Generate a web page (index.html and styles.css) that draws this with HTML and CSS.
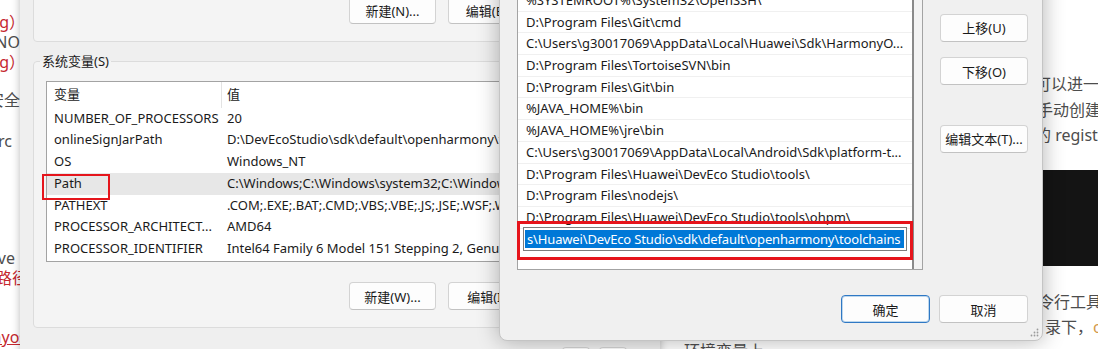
FILE: index.html
```html
<!DOCTYPE html>
<html lang="zh-CN">
<head>
    <meta charset="UTF-8">
    <meta name="viewport" content="width=device-width, initial-scale=1.0">
    <title>编辑环境变量</title>
    <link rel="stylesheet" href="styles.css">
</head>
<body>
<div class="desktop">

    <!-- blog page behind the dialogs -->
    <div class="page">
        <div class="page-left">
            <div class="para para-1">
                <div class="ln red"><span class="cut-5">ohpm 的安装路径g）</span></div>
                <div class="ln"><span>NPM_CONFIG_REGISTRY_ERNO</span></div>
                <div class="ln red"><span class="cut-5">以实际路径为准g）</span></div>
            </div>
            <div class="para para-2">
                <div class="ln"><span>以保证安全</span></div>
            </div>
            <div class="para para-3">
                <div class="ln"><span class="end-8">配置 .npmrc</span></div>
            </div>
            <div class="para para-4">
                <div class="ln"><span class="end-5">ohpm remove</span></div>
                <div class="ln red"><span class="cut-8">安装路径</span></div>
            </div>
            <div class="para para-5">
                <div class="ln red link"><span class="cut-7">openharmonyos</span></div>
            </div>
        </div>
        <div class="page-mid">环境变量上</div>
        <div class="page-right">
            <div class="rl in-1">可以进一步确认配置是否生效</div>
            <div class="rl in-3">手动创建配置文件</div>
            <div class="rl in-1">的 registry 地址</div>
            <div class="code-block"></div>
            <div class="rl rl-after in-4">令行工具</div>
            <div class="rl in-11">录下，<span class="hl">ohpm</span></div>
        </div>
    </div>

    <!-- 环境变量 dialog -->
    <div class="dialog env-dialog">
        <div class="group user-group">
            <div class="btn-row">
                <button class="btn">新建(N)...</button>
                <button class="btn">编辑(E)...</button>
                <button class="btn">删除(D)</button>
            </div>
        </div>
        <fieldset class="group sys-group">
            <legend>系统变量(S)</legend>
            <div class="listview">
                <div class="lv-head"><span class="lv-name">变量</span><span class="lv-val">值</span></div>
                <div class="lv-row"><span class="lv-name">NUMBER_OF_PROCESSORS</span><span class="lv-val">20</span></div>
                <div class="lv-row"><span class="lv-name">onlineSignJarPath</span><span class="lv-val">D:\DevEcoStudio\sdk\default\openharmony\toolchains\lib\hap-sign-tool.jar</span></div>
                <div class="lv-row"><span class="lv-name">OS</span><span class="lv-val">Windows_NT</span></div>
                <div class="lv-row is-selected"><span class="lv-name is-marked">Path</span><span class="lv-val">C:\Windows;C:\Windows\system32;C:\Windows\System32\Wbem;C:\Windows\System32\WindowsPowerShell\v1.0\</span></div>
                <div class="lv-row"><span class="lv-name">PATHEXT</span><span class="lv-val">.COM;.EXE;.BAT;.CMD;.VBS;.VBE;.JS;.JSE;.WSF;.WSH;.MSC</span></div>
                <div class="lv-row"><span class="lv-name">PROCESSOR_ARCHITECT...</span><span class="lv-val">AMD64</span></div>
                <div class="lv-row"><span class="lv-name">PROCESSOR_IDENTIFIER</span><span class="lv-val">Intel64 Family 6 Model 151 Stepping 2, GenuineIntel</span></div>
            </div>
            <div class="btn-row">
                <button class="btn">新建(W)...</button>
                <button class="btn">编辑(I)...</button>
                <button class="btn">删除(L)</button>
            </div>
        </fieldset>
        <div class="dialog-foot env-foot">
            <button class="btn">确定</button>
            <button class="btn">取消</button>
        </div>
    </div>

    <!-- 编辑环境变量 dialog -->
    <div class="dialog edit-dialog">
        <div class="edit-body">
            <div class="pathlist">
                <div class="pl-rows">
                    <div class="pl-row">%SYSTEMROOT%\System32\OpenSSH\</div>
                    <div class="pl-row">D:\Program Files\Git\cmd</div>
                    <div class="pl-row">C:\Users\g30017069\AppData\Local\Huawei\Sdk\HarmonyO...</div>
                    <div class="pl-row">D:\Program Files\TortoiseSVN\bin</div>
                    <div class="pl-row">D:\Program Files\Git\bin</div>
                    <div class="pl-row">%JAVA_HOME%\bin</div>
                    <div class="pl-row">%JAVA_HOME%\jre\bin</div>
                    <div class="pl-row">C:\Users\g30017069\AppData\Local\Android\Sdk\platform-t...</div>
                    <div class="pl-row">D:\Program Files\Huawei\DevEco Studio\tools\</div>
                    <div class="pl-row">D:\Program Files\nodejs\</div>
                    <div class="pl-row">D:\Program Files\Huawei\DevEco Studio\tools\ohpm\</div>
                    <div class="pl-edit-row">
                        <div class="pl-input"><span class="pl-sel">s\Huawei\DevEco Studio\sdk\default\openharmony\toolchains</span></div>
                    </div>
                </div>
                <div class="pl-scroll"></div>
                <div class="mark-box"></div>
            </div>
            <div class="side-btns">
                <button class="btn">删除(D)</button>
                <button class="btn">上移(U)</button>
                <button class="btn">下移(O)</button>
                <button class="btn btn-gap">编辑文本(T)...</button>
            </div>
        </div>
        <div class="dialog-foot">
            <button class="btn btn-default">确定</button>
            <button class="btn">取消</button>
        </div>
        <svg class="grip" width="9" height="9" viewBox="0 0 9 9">
            <circle cx="7.5" cy="1.5" r="0.9" fill="#9a9a9a"/>
            <circle cx="4.5" cy="4.5" r="0.9" fill="#9a9a9a"/>
            <circle cx="7.5" cy="4.5" r="0.9" fill="#9a9a9a"/>
            <circle cx="1.5" cy="7.5" r="0.9" fill="#9a9a9a"/>
            <circle cx="4.5" cy="7.5" r="0.9" fill="#9a9a9a"/>
            <circle cx="7.5" cy="7.5" r="0.9" fill="#9a9a9a"/>
        </svg>
    </div>

</div>
</body>
</html>
```

FILE: styles.css
```css
* {
    box-sizing: border-box;
}
body {
    margin: 0;
    font-family: "Noto Sans", "Noto Sans CJK SC", sans-serif;
    color: #1a1a1a;
}
.desktop {
    position: relative;
    width: 1098px;
    height: 349px;
    overflow: hidden;
    background: #fff;
}

/* page behind */
.page {
    display: flex;
    height: 100%;
    font-size: 16px;
    line-height: 20px;
    color: #4d4d4d;
}
.page-left {
    width: 20px;
    flex: none;
    padding-top: 12px;
}
.ln {
    display: flex;
    justify-content: flex-end;
    white-space: nowrap;
}
.ln span {
    flex: none;
}
.red {
    color: #c5282f;
}
.link span {
    text-decoration: underline;
}
.para-2 { margin-top: 18px; }
.para-3 { margin-top: 21px; }
.para-4 { margin-top: 97px; }
.para-5 { margin-top: 39px; }
.cut-5 { margin-right: -5px; }
.cut-7 { margin-right: -7px; }
.cut-8 { margin-right: -8px; }
.end-5 { margin-right: 5px; }
.end-8 { margin-right: 8px; }

.page-mid {
    flex: 1;
    padding: 339px 0 0 664px;
    line-height: 25.5px;
    white-space: nowrap;
}
.page-right {
    width: 64px;
    flex: none;
    padding-top: 72px;
    line-height: 25.5px;
}
.rl {
    white-space: nowrap;
}
.in-1 { padding-left: 1px; }
.in-3 { padding-left: 3px; }
.in-4 { padding-left: 4px; }
.in-11 { padding-left: 11px; }
.rl-after {
    margin-top: 24px;
}
.hl {
    color: #d39a4a;
}
.code-block {
    margin-top: 21px;
    height: 96px;
    background: #141414;
}

/* dialogs */
.dialog {
    position: absolute;
    font-size: 13px;
    background: #efefef;
}
.btn {
    height: 28px;
    padding: 0;
    font-family: "Noto Sans", "Noto Sans CJK SC", sans-serif;
    font-size: 13px;
    color: #1a1a1a;
    background: #fdfdfd;
    border: 1px solid #d3d3d3;
    border-bottom-color: #c2c2c2;
    border-radius: 4px;
}
.btn-row {
    display: flex;
    justify-content: flex-end;
    gap: 12px;
}
.btn-row .btn {
    width: 87px;
}

.env-dialog {
    left: 20px;
    top: -60px;
    width: 640px;
    height: 420px;
    padding: 0 13px;
    box-shadow: 0 0 8px rgba(0, 0, 0, 0.28);
}
.group {
    background: #f4f4f4;
    border: 1px solid #dcdcdc;
    border-radius: 4px;
}
.user-group {
    height: 102px;
    display: flex;
    flex-direction: column;
    justify-content: flex-end;
    padding: 0 12px 17px;
}
.sys-group {
    margin: 11px 0 0;
    padding: 11px 12px 17px;
    min-width: 0;
}
.sys-group legend {
    margin-left: -6px;
    padding: 0 2px;
    line-height: 17px;
    font-size: 13px;
}
.listview {
    height: 181px;
    margin-bottom: 20px;
    background: #fff;
    border: 1px solid #a3a3a3;
}
.lv-head,
.lv-row {
    display: grid;
    grid-template-columns: 175px minmax(0, 1fr);
    white-space: nowrap;
}
.lv-head {
    height: 25.5px;
    line-height: 25.5px;
}
.lv-head .lv-name {
    border-right: 1px solid #e3e3e3;
}
.lv-row {
    height: 21.8px;
    line-height: 21.8px;
}
.lv-name {
    padding-left: 7px;
    overflow: hidden;
}
.lv-val {
    padding-left: 5px;
    overflow: hidden;
}
.is-selected {
    background: #e7e7e7;
}
.lv-name.is-marked {
    position: relative;
    overflow: visible;
}
.is-marked::after {
    content: "";
    position: absolute;
    left: -5px;
    top: 1px;
    width: 64px;
    height: 22px;
    border: 2px solid #e5151c;
}
.env-foot {
    margin-top: 19px;
    padding-right: 20px;
}

.edit-dialog {
    left: 499px;
    top: -44px;
    width: 544px;
    padding: 13px 14px 17px 17px;
    background: #f0f0f0;
    border: 1px solid #c4c4c4;
    border-radius: 8px;
    box-shadow: 0 0 22px rgba(0, 0, 0, 0.3);
}
.edit-body {
    display: flex;
    gap: 17px;
}
.pathlist {
    position: relative;
    display: flex;
    width: 406px;
    height: 281px;
    margin-top: 19px;
    background: #fff;
    border: 1px solid #a3a3a3;
}
.pl-rows {
    flex: 1;
    min-width: 0;
}
.pl-row {
    height: 21.7px;
    line-height: 21px;
    padding-left: 8px;
    border-bottom: 1px solid #f0f0f0;
    white-space: nowrap;
    overflow: hidden;
}
.pl-edit-row {
    margin-top: -2px;
    padding-left: 5px;
}
.pl-input {
    width: 384px;
    height: 24px;
    padding: 2px 2px 2px 1px;
    background: #fff;
    border: 1px solid #7d7d7d;
}
.pl-sel {
    display: block;
    height: 18px;
    line-height: 18px;
    padding-left: 2px;
    background: #0078d7;
    color: #fff;
    letter-spacing: -0.15px;
    white-space: nowrap;
    overflow: hidden;
}
.pl-scroll {
    width: 10px;
    flex: none;
    background: #f3f3f3;
    border-left: 2px solid #8a8a8a;
}
.mark-box {
    position: absolute;
    left: -1px;
    top: 231px;
    width: 396px;
    height: 39px;
    border: 3px solid #e6141b;
}
.side-btns {
    display: flex;
    flex-direction: column;
    gap: 15.5px;
    width: 88px;
}
.btn-gap {
    margin-top: 24px;
}
.dialog-foot {
    display: flex;
    justify-content: flex-end;
    gap: 9px;
}
.edit-dialog .dialog-foot {
    margin-top: 25px;
}
.edit-dialog .dialog-foot .btn {
    width: 89px;
}
.btn-default {
    border: 1px solid #2f78c4;
    box-shadow: inset 0 0 0 1px rgba(0, 103, 192, 0.25);
}
.grip {
    position: absolute;
    right: 3px;
    bottom: 3px;
}
```
